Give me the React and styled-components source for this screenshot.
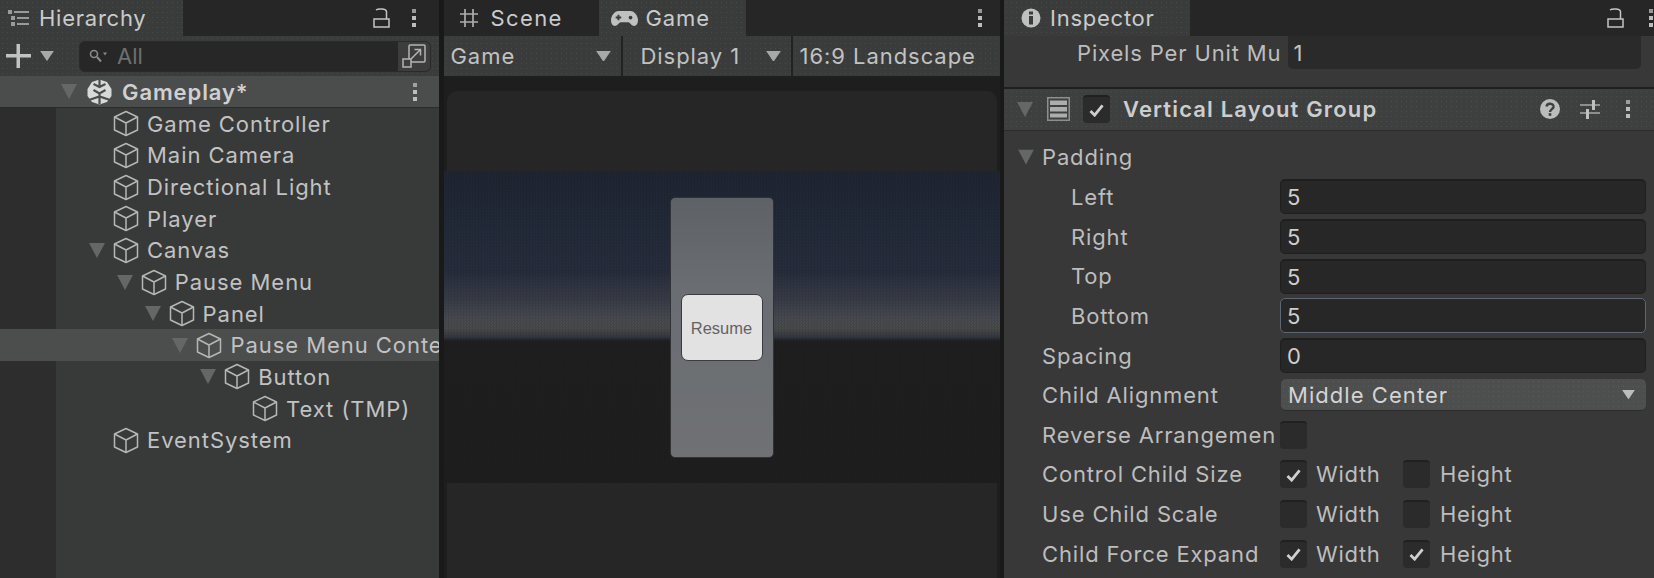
import React from "react";
import styled, { createGlobalStyle, css } from "styled-components";

const Global = createGlobalStyle`
  html, body { margin: 0; padding: 0; background: #191919; }
  #root { width: 1654px; height: 578px; overflow: hidden; }
  svg { flex: none; }
`;

const dots = css`
  background-image: radial-gradient(rgba(255, 255, 255, 0.07) 0.6px, transparent 0.8px);
  background-size: 5px 5px;
`;

const Page = styled.div`
  width: 1654px;
  height: 578px;
  display: grid;
  grid-template-columns: 439px 556px 650px;
  column-gap: 4.5px;
  background: #191919;
  font-family: Inter, "Liberation Sans", sans-serif;
  font-size: 22px;
  color: #c2c2c2;
  overflow: hidden;
`;
const Pane = styled.section`
  display: flex;
  flex-direction: column;
  min-width: 0;
  height: 578px;
  overflow: hidden;
  background: #383838;
`;
const TabStrip = styled.div`
  height: 36px;
  flex: none;
  display: flex;
  align-items: stretch;
  background: #262626;
`;
const Tab = styled.div`
  width: ${(p) => p.$w}px;
  flex: none;
  display: flex;
  align-items: center;
  gap: ${(p) => p.$gap ?? 8}px;
  padding-left: ${(p) => p.$pad ?? 8}px;
  box-sizing: border-box;
  background: ${(p) => (p.$active ? "#3a3c3b" : "transparent")};
  color: #cbcbcb;
  letter-spacing: ${(p) => p.$ls ?? 0.75}px;
  ${(p) => p.$active && dots}
`;
const StripIcons = styled.div`
  margin-left: auto;
  display: flex;
  align-items: center;
  gap: ${(p) => p.$gap ?? 14}px;
  padding-right: ${(p) => p.$pr ?? 21}px;
`;

/* hierarchy */
const HierBar = styled.div`
  height: 40px;
  flex: none;
  display: flex;
  align-items: center;
  padding: 0 7px 0 6px;
  background: #3a3c3b;
  box-sizing: border-box;
  ${dots}
`;
const AddBtn = styled.div`
  width: 73px;
  display: flex;
  align-items: center;
  gap: 9px;
`;
const SearchBox = styled.div`
  width: 352px;
  height: 31px;
  display: flex;
  align-items: center;
  border-radius: 6px;
  border: 1px solid #2a2a2a;
  background: #272727;
  color: #6f6f6f;
  padding-left: 9px;
  box-sizing: border-box;
  gap: 10px;
  overflow: hidden;
`;
const SearchBtn = styled.div`
  margin-left: auto;
  width: 32px;
  height: 100%;
  background: #3d3d3d;
  display: flex;
  align-items: center;
  justify-content: center;
`;
const Tree = styled.div`
  flex: 1;
  display: flex;
  flex-direction: column;
  background: linear-gradient(to right, #2d2d2d 56px, #383a39 56px);
`;
const SceneRow = styled.div`
  height: 32px;
  flex: none;
  box-sizing: border-box;
  border-bottom: 1px solid #2b2b2b;
  display: flex;
  align-items: center;
  padding: 0 21px 0 61px;
  background: #4b4d4c;
  font-weight: 600;
  color: #d0d0d0;
`;
const SceneName = styled.span`
  margin-left: 10px;
  letter-spacing: 0.9px;
`;
const SceneMenu = styled.span`
  margin-left: auto;
  display: flex;
`;
const Row = styled.div`
  height: 31.65px;
  flex: none;
  display: flex;
  align-items: center;
  white-space: nowrap;
  padding-left: ${(p) => 89 + p.$depth * 27.8}px;
  background: ${(p) => (p.$selected ? "#4c4d4d" : "transparent")};
`;
const Twist = styled.span`
  width: 24px;
  flex: none;
  display: flex;
`;
const RowLabel = styled.span`
  margin-left: 8px;
  letter-spacing: 0.95px;
`;

/* game */
const GameBar = styled.div`
  height: 40px;
  flex: none;
  display: grid;
  grid-template-columns: 177px 168px 207px;
  column-gap: 2px;
  background: #222;
`;
const BarCell = styled.div`
  display: flex;
  align-items: center;
  justify-content: space-between;
  background: #3a3c3b;
  padding: 0 ${(p) => p.$r ?? 10}px 0 ${(p) => p.$l ?? 7}px;
  letter-spacing: ${(p) => p.$ls ?? 0.95}px;
  white-space: nowrap;
  overflow: hidden;
  ${dots}
`;
const GameView = styled.div`
  flex: 1;
  display: flex;
  flex-direction: column;
  background: #1e1e1e;
  padding: 15px 0 0;
`;
const Letterbox = styled.div`
  height: ${(p) => p.$h}px;
  flex: none;
  margin: 0 3px;
  background: #262626;
  border-radius: ${(p) => p.$r};
`;
const Stage = styled.div`
  height: 312px;
  flex: none;
  display: flex;
  align-items: center;
  justify-content: center;
  background:
    repeating-conic-gradient(rgba(0, 0, 0, 0.08) 0 25%, transparent 0 50%) 0 0 / 3px 3px,
    linear-gradient(
      to bottom,
      #1f2531 0,
      #232a39 60px,
      #272d3c 100px,
      #383c47 128px,
      #474a4f 148px,
      #4a4b4a 157px,
      #333740 166px,
      #1f1f1f 170px,
      #1e1e1e 100%
    );
`;
const MenuPanel = styled.div`
  width: 104px;
  height: 261px;
  box-sizing: border-box;
  border: 1px solid #303236;
  border-radius: 5px;
  display: flex;
  align-items: center;
  justify-content: center;
  background: linear-gradient(to bottom, #5e6267 0, #6a6d72 90px, #6b6e72 140px, #6f7174 100%);
`;
const ResumeBtn = styled.div`
  width: 82px;
  height: 67px;
  box-sizing: border-box;
  border: 1px solid #3a3d40;
  border-radius: 7px;
  padding-top: 3px;
  background: #e2e2e2;
  color: #636363;
  display: flex;
  align-items: center;
  justify-content: center;
  font-family: "Liberation Sans", Arial, sans-serif;
  font-size: 16.5px;
`;

/* inspector */
const PrevRow = styled.div`
  height: 33px;
  flex: none;
  display: grid;
  grid-template-columns: 283.5px 353px;
  align-items: stretch;
`;
const PrevLabel = styled.div`
  padding-left: 73px;
  align-self: center;
  white-space: nowrap;
  letter-spacing: 0.85px;
  color: #bdbdbd;
`;
const PrevField = styled.div`
  background: #2a2a2a;
  border-radius: 0 0 5px 5px;
  padding-left: 6px;
  display: flex;
  align-items: center;
  letter-spacing: 0.2px;
`;
const Divider = styled.div`
  height: 1.5px;
  margin-top: 18px;
  flex: none;
  background: #1f1f1f;
`;
const CompHeader = styled.div`
  height: 42px;
  flex: none;
  display: flex;
  align-items: center;
  background: #3e3f3f;
  border-bottom: 1px solid #2a2a2a;
  box-sizing: border-box;
  padding-left: 13px;
  ${dots}
`;
const HeaderIconSlot = styled.span`
  display: flex;
  margin-left: ${(p) => p.$ml}px;
`;
const CompTitle = styled.span`
  margin-left: 13px;
  font-weight: 600;
  color: #cdcdcd;
  letter-spacing: 1.15px;
`;
const CompTools = styled.span`
  margin-left: auto;
  padding-right: 23px;
  display: flex;
  align-items: center;
  gap: 20px;
  svg:last-child {
    margin-left: 5px;
  }
`;
const Props = styled.div`
  padding-top: 7px;
  display: flex;
  flex-direction: column;
`;
const PropRow = styled.div`
  height: 39.65px;
  flex: none;
  display: grid;
  grid-template-columns: 276px 1fr;
  align-items: center;
  padding-right: 8px;
`;
const PropLabel = styled.div`
  padding-left: ${(p) => (p.$sub ? 67 : 38)}px;
  position: relative;
  white-space: nowrap;
  letter-spacing: 0.85px;
  color: #bdbdbd;
`;
const FoldArrow = styled.span`
  display: flex;
  position: absolute;
  left: 14px;
  top: 50%;
  transform: translateY(-50%);
`;
const Field = styled.div`
  height: 35px;
  box-sizing: border-box;
  border-radius: 5px;
  background: #272727;
  border: 1px solid ${(p) => (p.$focus ? "#5d6673" : "#1f1f1f")};
  border-top-width: ${(p) => (p.$focus ? 1 : 2)}px;
  display: flex;
  align-items: center;
  padding-left: 6px;
  color: #cecece;
`;
const Select = styled.div`
  height: 32px;
  box-sizing: border-box;
  border-radius: 5px;
  background: #4d4e4e;
  border-bottom: 1px solid #2b2b2b;
  margin-left: 1px;
  display: flex;
  align-items: center;
  justify-content: space-between;
  padding: 0 11px 0 7px;
  color: #d4d4d4;
  letter-spacing: 1.05px;
  ${dots}
`;
const Checks = styled.div`
  display: flex;
  align-items: center;
`;
const Box = styled.span`
  width: 27px;
  height: 28px;
  flex: none;
  border-radius: 4px;
  background: #2b2b2b;
  border-top: 2px solid #202020;
  box-sizing: border-box;
  display: flex;
  align-items: center;
  justify-content: center;
`;
const CheckLabel = styled.span`
  width: ${(p) => p.$w}px;
  padding-left: ${(p) => p.$pl}px;
  box-sizing: border-box;
  color: #bdbdbd;
  letter-spacing: 0.7px;
`;

/* drawings */
const Kebab = ({ c = "#bdbdbd" }) => (
  <svg width="6" height="20" viewBox="0 0 6 20" fill={c}>
    <rect x="1" y="1" width="4" height="4" opacity="0.75" />
    <rect x="1" y="8" width="4" height="4" />
    <rect x="1" y="15" width="4" height="4" />
  </svg>
);
const Lock = () => (
  <svg width="18" height="22" viewBox="0 0 18 22" fill="none" stroke="#c4c4c4" strokeWidth="1.5">
    <rect x="1" y="12" width="15" height="8" />
    <path d="M3 3 C5 1.5 13 1.5 13.5 4.5 V12" />
  </svg>
);
const ListIcon = () => (
  <svg width="22" height="18" viewBox="0 0 22 18" stroke="#b8b8b8" strokeWidth="1.6">
    <path d="M6 3h15M9 9h12M9 15h12" />
    <path d="M0 1h4v4h-4zM3 7h4v4h-4zM3 13h4v4h-4z" fill="#9a9a9a" stroke="none" />
  </svg>
);
const Plus = () => (
  <svg width="25" height="24" viewBox="0 0 25 24" fill="#c2c2c2">
    <rect x="0" y="10" width="25" height="3.5" />
    <rect x="10.5" y="0" width="3.5" height="24" />
  </svg>
);
const Caret = ({ size = 15, c = "#a8a8a8" }) => (
  <svg width={size} height={size * 0.72} viewBox="0 0 15 11" fill={c}>
    <path d="M0 0h15L7.5 11z" />
  </svg>
);
const TreeCaret = () => (
  <svg width="16" height="15" viewBox="0 0 16 15" fill="#656666">
    <path d="M0 0h16L8 15z" />
  </svg>
);
const Cube = () => (
  <svg width="26" height="27" viewBox="0 0 26 27" fill="none" stroke="#b6b6b6" strokeWidth="1.5" strokeLinejoin="round">
    <path d="M13 1.5 24.5 7v13L13 25.5 1.5 20V7z" />
    <path d="M1.5 7 13 13l11.5-6M13 13v12.5" />
  </svg>
);
const UnityLogo = () => (
  <svg width="25" height="26" viewBox="0 0 25 26">
    <path d="M12.5 0.5 20 3 24.5 10V17L20 23 12.5 25.5 5 23 .5 17V10L5 3z" fill="#d8d8d8" />
    <path d="M12.5 0v7M6.5 5l6 3 6-3M6.5 11l6 3.5 6-3.5M12.5 14v11M2 21l10.5-3.5L23 21" stroke="#4b4d4c" strokeWidth="2.2" fill="none" />
  </svg>
);
const SearchGlyph = () => (
  <svg width="18" height="14" viewBox="0 0 18 14" fill="none" stroke="#8a8a8a" strokeWidth="1.6">
    <circle cx="5" cy="5" r="3.5" />
    <path d="M8 8l4 4.5" strokeWidth="2" />
    <path d="M14 3.5h4l-2 3z" fill="#8a8a8a" stroke="none" />
  </svg>
);
const ExpandIcon = () => (
  <svg width="24" height="24" viewBox="0 0 24 24" fill="none" stroke="#b4b4b4" strokeWidth="1.5">
    <rect x="7" y="1" width="16" height="17" rx="1" />
    <rect x="1" y="15" width="8" height="8" fill="#3d3d3d" />
    <path d="M9 15 18 6M12.5 5.5h6v6" />
  </svg>
);
const GridIcon = () => (
  <svg width="20" height="20" viewBox="0 0 20 20" stroke="#adadad" strokeWidth="1.7">
    <path d="M6 1v18M14 1v18M1 6h18M1 14h18" />
  </svg>
);
const Gamepad = () => (
  <svg width="27" height="16" viewBox="0 0 29 17">
    <path d="M8 1h13c4 0 8 5 8 10 0 4-2 6-4 6-3 0-4-3-6-4h-9c-2 1-3 4-6 4-2 0-4-2-4-6C0 6 4 1 8 1z" fill="#c0c0c0" />
    <path d="M5 8h6M8 5v6" stroke="#3a3c3b" strokeWidth="2" />
    <circle cx="21" cy="8" r="2" fill="#3a3c3b" />
  </svg>
);
const InfoIcon = () => (
  <svg width="20" height="20" viewBox="0 0 20 20">
    <circle cx="10" cy="10" r="9.5" fill="#c0c0c0" />
    <rect x="8" y="3.5" width="4" height="3" fill="#3a3c3b" />
    <rect x="8" y="8" width="4" height="8.5" fill="#3a3c3b" />
  </svg>
);
const StackIcon = () => (
  <svg width="23" height="24" viewBox="0 0 23 24" fill="#adadad">
    <rect x="0.75" y="0.75" width="21.5" height="22.5" fill="none" stroke="#8e8e8e" strokeWidth="1.5" />
    <rect x="3" y="3.5" width="17" height="4.5" />
    <rect x="3" y="10" width="17" height="4.5" />
    <rect x="3" y="16.5" width="17" height="4" />
  </svg>
);
const Check = () => (
  <svg width="15" height="13" viewBox="0 0 16 14" fill="none" stroke="#cfcfcf" strokeWidth="3">
    <path d="M1.5 7.5 6 12 14.5 1.5" />
  </svg>
);
const HelpIcon = () => (
  <svg width="20" height="20" viewBox="0 0 20 20">
    <circle cx="10" cy="10" r="10" fill="#bcbcbc" />
    <path d="M6.5 7.5C7 3.5 14 4 13.5 8c-.3 2-3.5 2.5-3.5 5" fill="none" stroke="#3e3f3f" strokeWidth="2.4" />
    <rect x="8.7" y="14.2" width="2.6" height="2.6" fill="#3e3f3f" />
  </svg>
);
const SlidersIcon = () => (
  <svg width="20" height="23" viewBox="0 0 20 23" stroke="#a8a8a8" strokeWidth="1.6">
    <path d="M0 7h20M0 15h20" />
    <rect x="12" y="2" width="3" height="10" fill="#c0c0c0" stroke="none" />
    <rect x="6" y="11" width="3" height="10" fill="#c0c0c0" stroke="none" />
  </svg>
);

const treeRows = [
  ["Game Controller", 0],
  ["Main Camera", 0],
  ["Directional Light", 0],
  ["Player", 0],
  ["Canvas", 0, true],
  ["Pause Menu", 1, true],
  ["Panel", 2, true],
  ["Pause Menu Conte", 3, true, true],
  ["Button", 4, true],
  ["Text (TMP)", 5],
  ["EventSystem", 0],
];

const Toggle = ({ on }) => <Box>{on && <Check />}</Box>;

const ToggleRow = ({ label, a, b }) => (
  <PropRow>
    <PropLabel>{label}</PropLabel>
    <Checks>
      <Toggle on={a} />
      <CheckLabel $w={96} $pl={9}>Width</CheckLabel>
      <Toggle on={b} />
      <CheckLabel $w={100} $pl={10}>Height</CheckLabel>
    </Checks>
  </PropRow>
);

export default function App() {
  return (
    <Page>
      <Global />
      <Pane>
        <TabStrip>
          <Tab $active $w={183} $pad={8} $gap={9}>
            <ListIcon />
            Hierarchy
          </Tab>
          <StripIcons $gap={20} $pr={22}>
            <Lock />
            <Kebab />
          </StripIcons>
        </TabStrip>
        <HierBar>
          <AddBtn>
            <Plus />
            <Caret size={14} />
          </AddBtn>
          <SearchBox>
            <SearchGlyph />
            All
            <SearchBtn>
              <ExpandIcon />
            </SearchBtn>
          </SearchBox>
        </HierBar>
        <Tree>
          <SceneRow>
            <TreeCaret />
            <HeaderIconSlot $ml={10}>
              <UnityLogo />
            </HeaderIconSlot>
            <SceneName>Gameplay*</SceneName>
            <SceneMenu>
              <Kebab />
            </SceneMenu>
          </SceneRow>
          {treeRows.map(([name, depth, open, sel]) => (
            <Row key={name} $depth={depth} $selected={sel}>
              <Twist>{open && <TreeCaret />}</Twist>
              <Cube />
              <RowLabel>{name}</RowLabel>
            </Row>
          ))}
        </Tree>
      </Pane>

      <Pane>
        <TabStrip>
          <Tab $w={155} $pad={15} $gap={12} $ls={1.4}>
            <GridIcon />
            Scene
          </Tab>
          <Tab $active $w={147} $pad={12} $gap={8} $ls={0.9}>
            <Gamepad />
            Game
          </Tab>
          <StripIcons $pr={17}>
            <Kebab />
          </StripIcons>
        </TabStrip>
        <GameBar>
          <BarCell>
            Game
            <Caret />
          </BarCell>
          <BarCell $l={18}>
            Display 1
            <Caret />
          </BarCell>
          <BarCell $l={7} $r={0}>
            16:9 Landscape
          </BarCell>
        </GameBar>
        <GameView>
          <Letterbox $h={80} $r="10px 10px 0 0" />
          <Stage>
            <MenuPanel>
              <ResumeBtn>Resume</ResumeBtn>
            </MenuPanel>
          </Stage>
          <Letterbox $h={95} $r="0" />
        </GameView>
      </Pane>

      <Pane>
        <TabStrip>
          <Tab $active $w={186} $pad={17} $gap={9}>
            <InfoIcon />
            Inspector
          </Tab>
          <StripIcons $gap={23} $pr={0}>
            <Lock />
            <Kebab />
          </StripIcons>
        </TabStrip>
        <PrevRow>
          <PrevLabel>Pixels Per Unit Mu</PrevLabel>
          <PrevField>1</PrevField>
        </PrevRow>
        <Divider />
        <CompHeader>
          <TreeCaret />
          <HeaderIconSlot $ml={14}>
            <StackIcon />
          </HeaderIconSlot>
          <HeaderIconSlot $ml={13}>
            <Box>
              <Check />
            </Box>
          </HeaderIconSlot>
          <CompTitle>Vertical Layout Group</CompTitle>
          <CompTools>
            <HelpIcon />
            <SlidersIcon />
            <Kebab />
          </CompTools>
        </CompHeader>
        <Props>
          <PropRow>
            <PropLabel>
              <FoldArrow>
                <TreeCaret />
              </FoldArrow>
              Padding
            </PropLabel>
          </PropRow>
          <PropRow>
            <PropLabel $sub>Left</PropLabel>
            <Field>5</Field>
          </PropRow>
          <PropRow>
            <PropLabel $sub>Right</PropLabel>
            <Field>5</Field>
          </PropRow>
          <PropRow>
            <PropLabel $sub>Top</PropLabel>
            <Field>5</Field>
          </PropRow>
          <PropRow>
            <PropLabel $sub>Bottom</PropLabel>
            <Field $focus>5</Field>
          </PropRow>
          <PropRow>
            <PropLabel>Spacing</PropLabel>
            <Field>0</Field>
          </PropRow>
          <PropRow>
            <PropLabel>Child Alignment</PropLabel>
            <Select>
              Middle Center
              <Caret size={13} c="#bdbdbd" />
            </Select>
          </PropRow>
          <PropRow>
            <PropLabel>Reverse Arrangemen</PropLabel>
            <Checks>
              <Toggle />
            </Checks>
          </PropRow>
          <ToggleRow label="Control Child Size" a />
          <ToggleRow label="Use Child Scale" />
          <ToggleRow label="Child Force Expand" a b />
        </Props>
      </Pane>
    </Page>
  );
}
